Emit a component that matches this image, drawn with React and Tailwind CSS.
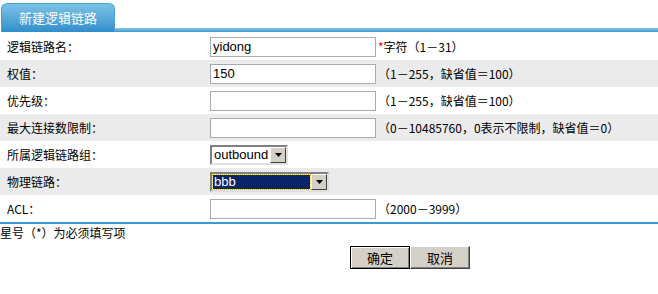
import React from "react";

const font = { fontFamily: '"Noto Sans CJK SC", "Liberation Sans", sans-serif' };

function Input({ value = "" }) {
  return (
    <div className="w-[166px] h-[20px] border border-[#a5acb2] bg-white flex items-center px-[2px] text-[13px] text-black" style={{ fontFamily: '"Liberation Sans", sans-serif' }}>
      {value}
    </div>
  );
}

function Arrow() {
  return (
    <div className="w-[16px] h-[16px] bg-[#d4d0c8] border border-t-white border-l-white border-r-[#404040] border-b-[#404040] flex items-center justify-center">
      <svg width="7" height="4" viewBox="0 0 7 4"><path d="M0 0h7L3.5 4z" fill="#000" /></svg>
    </div>
  );
}

function Select({ value, width, selected }) {
  return (
    <div className={`h-[20px] border-2 border-t-[#808080] border-l-[#808080] border-r-[#e0e0e0] border-b-[#e0e0e0] bg-white flex items-center ${width}`} style={{ fontFamily: '"Liberation Sans", sans-serif' }}>
      <div className="flex-1 h-full flex items-center p-[1px]">
        {selected ? (
          <div className="h-full w-full bg-[#0a246a] text-white text-[13px] leading-none flex items-center px-[1px] outline-1 outline-dotted outline-[#f0c000]">{value}</div>
        ) : (
          <div className="text-[13px] text-black px-[1px]">{value}</div>
        )}
      </div>
      <Arrow />
    </div>
  );
}

function Row({ label, gray, children, hint }) {
  return (
    <div className={`h-[27px] flex items-center ${gray ? "bg-[#ebebeb]" : "bg-white"}`}>
      <div className="w-[210px] pl-[7px] text-[12px] text-black">{label}</div>
      {children}
      {hint && <div className="pl-[2px] text-[12px] text-black whitespace-nowrap">{hint}</div>}
    </div>
  );
}

export default function App() {
  return (
    <div className="w-[658px] h-[294px] bg-white" style={font}>
      <div className="pt-[3px] flex items-end">
        <div className="ml-[1px] w-[114px] h-[29px] rounded-t-[6px] bg-gradient-to-b from-[#7cc2e8] to-[#2f8fcb] border border-[#4a9fd3] border-b-0 flex items-center justify-center text-white text-[13px]">
          新建逻辑链路
        </div>
        <div className="flex-1 h-[4px] bg-gradient-to-b from-[#86c6e8] to-[#3a97cf]" />
      </div>
      <div className="h-[1px] bg-white" />
      <Row label="逻辑链路名：" hint={<span><span className="text-red-600">*</span>字符（1－31）</span>}>
        <Input value="yidong" />
      </Row>
      <Row label="权值：" gray hint="（1－255，缺省值＝100）">
        <Input value="150" />
      </Row>
      <Row label="优先级：" hint="（1－255，缺省值＝100）">
        <Input />
      </Row>
      <Row label="最大连接数限制：" gray hint="（0－10485760，0表示不限制，缺省值＝0）">
        <Input />
      </Row>
      <Row label="所属逻辑链路组：">
        <Select value="outbound" width="w-[78px]" />
      </Row>
      <Row label="物理链路：" gray>
        <Select value="bbb" width="w-[119px]" selected />
      </Row>
      <Row label="ACL：" hint="（2000－3999）">
        <Input />
      </Row>
      <div className="h-[2px] bg-[#3a9ad2]" />
      <div className="text-[12px] text-black leading-[16px] pt-[1px]">星号（*）为必须填写项</div>
      <div className="flex justify-start pl-[350px] pt-[5px]">
        <button className="w-[60px] h-[23px] bg-[#d4d0c8] border border-black text-[13px] text-black flex items-center justify-center shadow-[inset_1px_1px_0_#fff,inset_-1px_-1px_0_#808080]">确定</button>
        <button className="w-[60px] h-[23px] bg-[#d4d0c8] text-[13px] text-black flex items-center justify-center border border-t-white border-l-white border-r-[#404040] border-b-[#404040] shadow-[inset_-1px_-1px_0_#808080]">取消</button>
      </div>
    </div>
  );
}
